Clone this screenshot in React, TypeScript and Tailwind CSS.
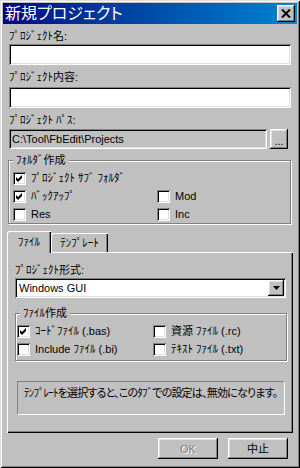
import type { ReactNode } from 'react';

const raised =
  'shadow-[inset_-1px_-1px_0_#000,inset_1px_1px_0_#fff,inset_-2px_-2px_0_#808080,inset_2px_2px_0_#dfdfdf]';
const sunken =
  'shadow-[inset_1px_1px_0_#808080,inset_-1px_-1px_0_#fff,inset_2px_2px_0_#000,inset_-2px_-2px_0_#dfdfdf]';
const etched = 'border border-[#808080] shadow-[inset_1px_1px_0_#fff,1px_1px_0_#fff]';

function CheckBox({ checked }: { checked?: boolean }) {
  return (
    <span className={`flex h-[13px] w-[13px] shrink-0 bg-white ${sunken}`}>
      {checked && (
        <svg width="13" height="13" viewBox="0 0 13 13">
          <polygon points="3,5 5,7 9,3 9,6 5,10 3,8" fill="#000" />
        </svg>
      )}
    </span>
  );
}

function CheckRow({ checked, children }: { checked?: boolean; children: ReactNode }) {
  return (
    <div className="flex h-[18px] items-center gap-[5px]">
      <CheckBox checked={checked} />
      <span className="whitespace-nowrap">{children}</span>
    </div>
  );
}

function Group({ title, className, children }: { title: string; className?: string; children: ReactNode }) {
  return (
    <div className={`relative ${etched} ${className ?? ''}`}>
      <span className="absolute -top-[8px] left-[4px] h-[14px] bg-[#c0c0c0] px-[3px]">{title}</span>
      {children}
    </div>
  );
}

export default function App() {
  return (
    <div className="flex h-[468px] w-[300px] flex-col bg-[#c0c0c0] p-[3px] font-['Liberation_Sans','Noto_Sans_CJK_JP',sans-serif] text-[11px] leading-[14px] text-black [font-feature-settings:'palt'] shadow-[inset_1px_1px_0_#dfdfdf,inset_-1px_-1px_0_#000,inset_2px_2px_0_#fff,inset_-2px_-2px_0_#808080]">
      {/* title bar */}
      <div className="flex h-[21px] shrink-0 items-center justify-between bg-linear-to-r from-[#000080] to-[#1084d0] pl-[2px] pr-[2px]">
        <span className="text-[16px] leading-[21px] text-white">新規プロジェクト</span>
        <button className={`flex h-[17px] w-[18px] items-center justify-center bg-[#c0c0c0] ${raised}`}>
          <svg width="10" height="9" viewBox="0 0 10 9">
            <path d="M1 0.5 L9 8.5 M9 0.5 L1 8.5" stroke="#000" strokeWidth="2" />
          </svg>
        </button>
      </div>

      <div className="flex flex-1 flex-col px-[6px]">
        <div className="mt-[5px] h-[14px]">ﾌﾟﾛｼﾞｪｸﾄ名:</div>
        <div className={`mt-[1px] h-[21px] bg-white ${sunken}`} />

        <div className="mt-[5px] h-[14px]">ﾌﾟﾛｼﾞｪｸﾄ内容:</div>
        <div className={`mt-[3px] h-[21px] bg-white ${sunken}`} />

        <div className="mt-[5px] h-[14px]">ﾌﾟﾛｼﾞｪｸﾄ ﾊﾟｽ:</div>
        <div className="mt-[2px] flex h-[20px] gap-[3px] pr-[3px]">
          <div className={`flex flex-1 items-center pl-[3px] ${sunken}`}>{'C:\\Tool\\FbEdit\\Projects'}</div>
          <button className={`flex w-[18px] items-end justify-center pb-[3px] leading-[10px] ${raised}`}>...</button>
        </div>

        {/* folder group */}
        <Group title="ﾌｫﾙﾀﾞ作成" className="-ml-[1px] mt-[11px] pb-[0px] pl-[4px] pt-[8px]">
          <CheckRow checked>ﾌﾟﾛｼﾞｪｸﾄ ｻﾌﾞ ﾌｫﾙﾀﾞ</CheckRow>
          <div className="grid grid-cols-[144px_1fr]">
            <CheckRow checked>ﾊﾞｯｸｱｯﾌﾟ</CheckRow>
            <CheckRow>Mod</CheckRow>
            <CheckRow>Res</CheckRow>
            <CheckRow>Inc</CheckRow>
          </div>
        </Group>

        {/* tabs */}
        <div className="-ml-[2px] mt-[7px] flex h-[22px] items-end">
          <div className="relative z-10 flex h-[22px] w-[44px] items-start justify-center rounded-tl-[2px] bg-[#c0c0c0] pt-[4px] shadow-[inset_1px_1px_0_#fff,inset_-1px_0_0_#000,inset_-2px_0_0_#808080]">
            ﾌｧｲﾙ
          </div>
          <div className="mb-[1px] flex h-[19px] w-[57px] items-start justify-center rounded-tl-[2px] pt-[3px] shadow-[inset_1px_1px_0_#fff,inset_-1px_0_0_#000,inset_-2px_0_0_#808080]">
            ﾃﾝﾌﾟﾚｰﾄ
          </div>
        </div>

        <div className="-mx-[2px] -mt-[1px] flex h-[181px] flex-col pl-[8px] pr-[7px] pt-[11px] shadow-[inset_1px_1px_0_#fff,inset_-1px_-1px_0_#000,inset_-2px_-2px_0_#808080]">
          <div className="h-[14px]">ﾌﾟﾛｼﾞｪｸﾄ形式:</div>
          <div className={`mt-[1px] flex h-[20px] items-center bg-white pl-[4px] pr-[2px] ${sunken}`}>
            <span className="flex-1">Windows GUI</span>
            <span className={`flex h-[16px] w-[16px] items-center justify-center bg-[#c0c0c0] ${raised}`}>
              <svg width="7" height="4" viewBox="0 0 7 4">
                <polygon points="0,0 7,0 3.5,4" fill="#000" />
              </svg>
            </span>
          </div>

          <Group title="ﾌｧｲﾙ作成" className="-mr-[1px] mt-[15px] pb-[2px] pl-[1px] pt-[8px]">
            <div className="grid grid-cols-[136px_1fr]">
              <CheckRow checked>ｺｰﾄﾞﾌｧｲﾙ (.bas)</CheckRow>
              <CheckRow>資源 ﾌｧｲﾙ (.rc)</CheckRow>
              <CheckRow>Include ﾌｧｲﾙ (.bi)</CheckRow>
              <CheckRow>ﾃｷｽﾄ ﾌｧｲﾙ (.txt)</CheckRow>
            </div>
          </Group>

          <div className="ml-[2px] mr-[1px] mt-[20px] h-[34px] whitespace-nowrap border border-b-white border-l-[#808080] border-r-white border-t-[#808080] pl-[6px] pt-[4px] tracking-[-0.8px]">
            ﾃﾝﾌﾟﾚｰﾄを選択すると、このﾀﾌﾞでの設定は、無効になります。
          </div>
        </div>

        <div className="mr-[3px] mt-[5px] flex justify-end gap-[10px]">
          <button className={`h-[21px] w-[60px] text-[#808080] [text-shadow:1px_1px_0_#fff] ${raised}`}>OK</button>
          <button className={`h-[21px] w-[60px] ${raised}`}>中止</button>
        </div>
      </div>
    </div>
  );
}
